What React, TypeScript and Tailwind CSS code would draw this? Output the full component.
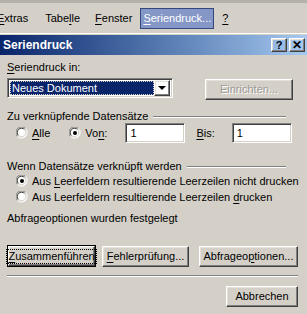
import React from 'react'

const raised =
  'border border-t-white border-l-white border-r-[#404040] border-b-[#404040] shadow-[inset_-1px_-1px_#808080,inset_1px_1px_#e4e0d8]'
const sunken =
  'border border-t-[#808080] border-l-[#808080] border-b-white border-r-white shadow-[inset_1px_1px_#404040,inset_-1px_-1px_#d4d0c8]'

function Radio({ checked }: { checked?: boolean }) {
  return (
    <svg width="12" height="12" viewBox="0 0 12 12" className="shrink-0">
      <path d="M1.5 9.5 A5 5 0 0 1 9.5 1.5" fill="none" stroke="#808080" />
      <path d="M9.5 1.5 A5 5 0 0 1 1.5 9.5" fill="none" stroke="#ffffff" />
      <circle cx="6" cy="6" r="4.5" fill="#fff" />
      <path d="M2.5 8.5 A4 4 0 0 1 8.5 2.5" fill="none" stroke="#404040" />
      <path d="M8.5 2.5 A4 4 0 0 1 2.5 8.5" fill="none" stroke="#d4d0c8" />
      {checked && <circle cx="6" cy="6" r="2" fill="#000" />}
    </svg>
  )
}

function Btn({ children, className = '', disabled }: { children: React.ReactNode; className?: string; disabled?: boolean }) {
  return (
    <div
      className={`${raised} flex items-center justify-center h-[21px] ${disabled ? 'text-[#9c9a94] [text-shadow:1px_1px_#fff]' : 'text-black'} ${className}`}
    >
      {children}
    </div>
  )
}

function Group({ title }: { title: string }) {
  return (
    <div className="flex items-center gap-[5px] mr-[14px]">
      <span>{title}</span>
      <div className="flex-1 h-[2px] border-t border-t-[#808080] border-b border-b-white" />
    </div>
  )
}

export default function App() {
  return (
    <div
      className="w-[307px] h-[314px] bg-[#d4d0c8] overflow-hidden text-[11px] leading-none text-black"
      style={{ fontFamily: '"Liberation Sans", Arial, sans-serif' }}
    >
      <div className="h-[3px] bg-[#b4b1ab]" />
      <div className="h-[30px] flex items-center">
        <span className="ml-[-3px]"><u className="underline-offset-2">E</u>xtras</span>
        <span className="ml-[17px]">Tabe<u className="underline-offset-2">l</u>le</span>
        <span className="ml-[15px]"><u className="underline-offset-2">F</u>enster</span>
        <span className="ml-[8px] h-[21px] px-[2px] flex items-center bg-[#8597c7] border border-[#34487f] text-white">
          <u className="underline-offset-2">S</u>eriendruck...
        </span>
        <span className="ml-[8px]"><u className="underline-offset-2">?</u></span>
      </div>

      <div className="border-t border-t-white">
        <div className="h-[1px] bg-[#d4d0c8]" />
        <div className="h-[20px] flex items-center bg-gradient-to-r from-[#0a246a] to-[#a6caf0] pr-[2px]">
          <span className="ml-[3px] font-bold text-white text-[12px]">Seriendruck</span>
          <div className={`${raised} ml-auto w-[16px] h-[14px] flex items-center justify-center font-bold text-[11px]`}>?</div>
          <div className={`${raised} ml-[2px] w-[16px] h-[14px] flex items-center justify-center font-bold text-[12px]`}>✕</div>
        </div>

        <div className="px-[7px]">
          <div className="mt-[7px]"><u className="underline-offset-2">S</u>eriendruck in:</div>

          <div className="mt-[5px] flex items-start">
            <div className={`${sunken} w-[166px] h-[20px] flex items-center p-[2px] bg-white`}>
              <div className="flex-1 h-full bg-[#0a246a] text-white flex items-center pl-[2px] outline-1 outline-dotted outline-offset-[-1px] outline-[#d4d0c8]">
                Neues Dokument
              </div>
              <div className={`${raised} w-[16px] h-[16px] flex items-center justify-center`}>
                <div className="w-0 h-0 border-l-[4px] border-r-[4px] border-t-[4px] border-l-transparent border-r-transparent border-t-black" />
              </div>
            </div>
            <Btn disabled className="ml-[32px] w-[88px] mt-[1px]">Einrichten...</Btn>
          </div>

          <div className="mt-[11px]"><Group title="Zu verknüpfende Datensätze" /></div>

          <div className="mt-[1px] h-[20px] flex items-center">
            <div className="ml-[9px]"><Radio /></div>
            <span className="ml-[4px]"><u className="underline-offset-2">A</u>lle</span>
            <div className="ml-[19px]"><Radio checked /></div>
            <span className="ml-[4px]">Vo<u className="underline-offset-2">n</u>:</span>
            <div className={`${sunken} ml-[18px] w-[60px] h-[20px] bg-white flex items-center pl-[4px]`}>1</div>
            <span className="ml-[11px]"><u className="underline-offset-2">B</u>is:</span>
            <div className={`${sunken} ml-[17px] w-[60px] h-[20px] bg-white flex items-center pl-[4px]`}>1</div>
          </div>

          <div className="mt-[18px]"><Group title="Wenn Datensätze verknüpft werden" /></div>

          <div className="mt-[3px] flex items-center gap-[4px] ml-[9px]">
            <Radio checked />
            <span>Aus <u className="underline-offset-2">L</u>eerfeldern resultierende Leerzeilen nicht drucken</span>
          </div>
          <div className="mt-[4px] flex items-center gap-[4px] ml-[9px]">
            <Radio />
            <span>Aus Leerfeldern resultierende Leerzeilen <u className="underline-offset-2">d</u>rucken</span>
          </div>

          <div className="mt-[10px]">Abfrageoptionen wurden festgelegt</div>

          <div className="mt-[21px] flex items-center">
            <div className="border border-black">
              <div className={`${raised} h-[20px] w-[87px] flex items-center justify-center`}>
                <span className="outline-1 outline-dotted outline-black outline-offset-[1px]">
                  <u className="underline-offset-2">Z</u>usammenführen
                </span>
              </div>
            </div>
            <Btn className="ml-[6px] w-[87px]"><u className="underline-offset-2">F</u>ehlerprüfung...</Btn>
            <Btn className="ml-[10px] w-[99px]">Abfrageo<u className="underline-offset-2">p</u>tionen...</Btn>
          </div>

          <div className="mt-[8px] mr-[2px] h-[2px] border-t border-t-[#808080] border-b border-b-white" />

          <div className="mt-[9px] flex justify-end mr-[2px]">
            <Btn className="w-[72px]">Abbrechen</Btn>
          </div>
        </div>
      </div>
    </div>
  )
}
